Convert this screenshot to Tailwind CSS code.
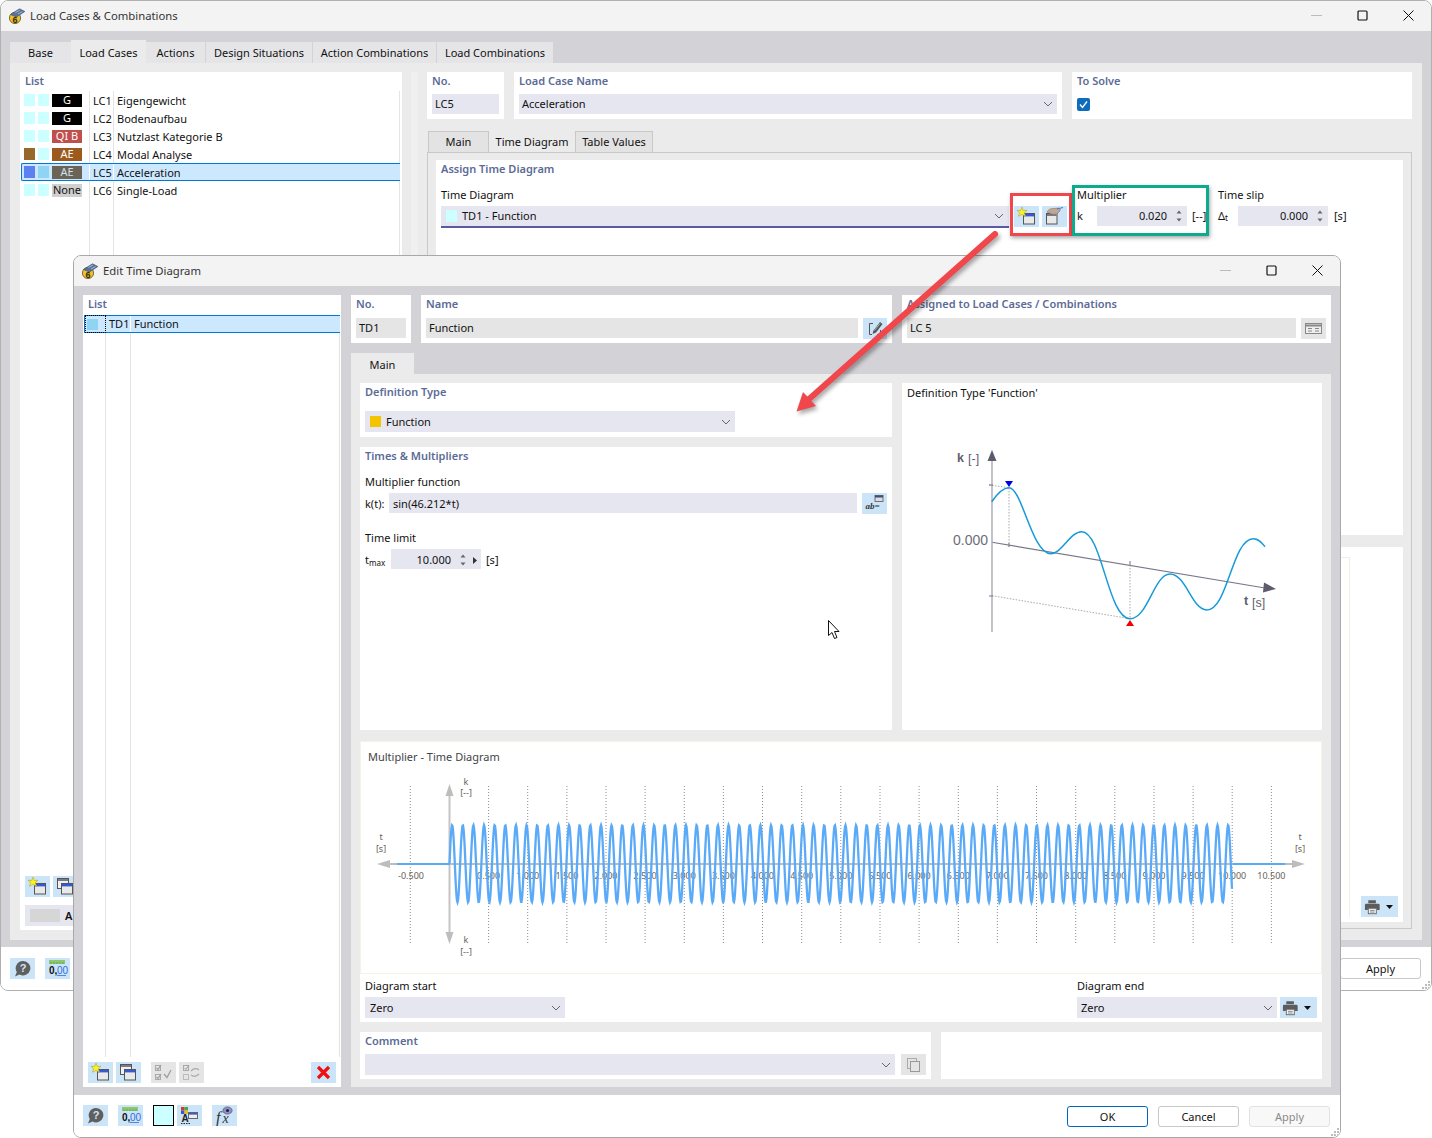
<!DOCTYPE html>
<html lang="en">
<head>
<meta charset="utf-8">
<title>Load Cases &amp; Combinations</title>
<script src="https://cdn.jsdelivr.net/npm/@tailwindcss/browser@4"></script>
</head>
<body class="bg-white">
<svg width="0" height="0" class="absolute">
  <defs>
    <symbol id="app" viewBox="0 0 16 16">
      <circle cx="6" cy="10" r="5.600" fill="#f0c030" stroke="#5e5020" stroke-width="0.800"/>
      <path d="M1.500 6.500 L10.500 0.800 L15.800 3.500 L7.500 9 Z" fill="#59749c" stroke="#36496a" stroke-width="0.600"/>
      <path d="M6.500 4.500 L11 2 M9 6 L13.500 3.500" stroke="#c9d6e6" stroke-width="0.700"/>
      <text x="6" y="14.500" font-size="9" font-weight="700" text-anchor="middle" fill="#332a00" font-family="Liberation Sans">6</text>
    </symbol>
    <symbol id="new" viewBox="0 0 25 21">
      <rect x="9.500" y="7.500" width="11" height="10.500" fill="#e9e9e9" stroke="#555"/>
      <rect x="10" y="8" width="10" height="2.400" fill="#3658d8"/>
      <path d="M8 1 L9.300 4.500 L13 4.200 L10.300 6.700 L11.600 10.300 L8 8.400 L4.400 10.300 L5.700 6.700 L3 4.200 L6.700 4.500 Z" fill="#fff21a" stroke="#9a9a40" stroke-width="0.500"/>
    </symbol>
    <symbol id="copy" viewBox="0 0 25 21">
      <rect x="4.500" y="2.500" width="11" height="10" fill="#f0f0f0" stroke="#555"/>
      <rect x="5" y="3" width="10" height="2" fill="#7a7a8a"/>
      <rect x="8.500" y="7.500" width="11" height="10.500" fill="#e9e9e9" stroke="#555"/>
      <rect x="9" y="8" width="10" height="2.400" fill="#3658d8"/>
    </symbol>
    <symbol id="edit" viewBox="0 0 25 21">
      <rect x="4.500" y="7.500" width="10.500" height="10.500" fill="#e9e9e9" stroke="#555"/>
      <rect x="5" y="8" width="9.500" height="2" fill="#7a7a8a"/>
      <path d="M5 6 Q7 2 12 2.500 L17 2 Q19 3 18 5 L15 8 Q10 9.500 5 6Z" fill="#c0a890" stroke="#7a6a5c" stroke-width="0.500"/>
      <path d="M15 3 L21 1.500" stroke="#4a78d8" stroke-width="1.200"/>
    </symbol>
    <symbol id="help" viewBox="0 0 25 21">
      <path d="M13 3 a7.200 7.200 0 1 1 -3.500 13.400 L5 18.500 L6.800 14 A7.200 7.200 0 0 1 13 3Z" fill="#5f5f5f"/>
      <text x="13" y="14" font-size="11" font-weight="700" text-anchor="middle" fill="#cfe5f7" font-family="Liberation Sans">?</text>
    </symbol>
    <symbol id="num" viewBox="0 0 25 21">
      <rect x="4" y="2" width="16" height="4" fill="#8cc874"/>
      <path d="M6 4V6M9 4V6M12 4V6M15 4V6M18 4V6" stroke="#5f9a48" stroke-width="0.800"/>
      <text x="4" y="15.500" font-size="10" font-weight="700" fill="#111" font-family="Liberation Sans">0,</text>
      <text x="12" y="15.500" font-size="10" fill="#2f6fdc" font-family="Liberation Sans">00</text>
      <path d="M12 17.500H21" stroke="#2f6fdc" stroke-width="0.800"/>
    </symbol>
    <symbol id="style" viewBox="0 0 25 21">
      <rect x="4" y="2" width="3.500" height="3.500" fill="#d83a2c"/><rect x="7.500" y="2" width="3.500" height="3.500" fill="#45a845"/>
      <rect x="4" y="5.500" width="3.500" height="3.500" fill="#3658d8"/><rect x="7.500" y="5.500" width="3.500" height="3.500" fill="#e8c020"/>
      <text x="4.500" y="17" font-size="10" font-weight="700" fill="#222" font-family="Liberation Sans">A</text>
      <path d="M4 18.500H13" stroke="#222" stroke-dasharray="1.500 1"/>
      <rect x="11.500" y="7.500" width="9" height="6" fill="#eee" stroke="#666"/><rect x="12" y="8" width="8" height="1.600" fill="#3658d8"/>
    </symbol>
    <symbol id="fx" viewBox="0 0 25 21">
      <text x="4" y="18" font-size="16" font-style="italic" font-family="Liberation Serif" fill="#333">f</text>
      <text x="10.500" y="18" font-size="14" font-style="italic" font-family="Liberation Serif" fill="#333">x</text>
      <ellipse cx="15.500" cy="5.500" rx="4.600" ry="3.600" fill="#8f8fd0" stroke="#444" stroke-width="0.600"/>
      <circle cx="15.500" cy="5.500" r="1.500" fill="#223"/>
    </symbol>
    <symbol id="print" viewBox="0 0 20 19">
      <path d="M5 1.500H14V5H5Z" fill="#5c5c5c"/>
      <path d="M2.500 5.500H17a1.500 1.500 0 0 1 1.500 1.500V13H15V11H4.500V13H1V7a1.500 1.500 0 0 1 1.500-1.500Z" fill="#5c5c5c"/>
      <rect x="5" y="11" width="9.500" height="6.500" fill="#f4f4f4" stroke="#5c5c5c"/>
      <path d="M7 13.500H12.500M7 15.500H12.500" stroke="#5c5c5c" stroke-width="0.800"/>
    </symbol>
    <symbol id="chev" viewBox="0 0 10 6"><path d="M1 1 L5 5 L9 1" fill="none" stroke="#666" stroke-width="1"/></symbol>
    <symbol id="spin" viewBox="0 0 8 14"><path d="M4 1.500 L6.500 4.500 H1.500Z M4 12.500 L6.500 9.500 H1.500Z" fill="#666"/></symbol>
    <symbol id="grip" viewBox="0 0 11 11"><path d="M8 2h2v2H8zM5 5h2v2H5zM8 5h2v2H8zM2 8h2v2H2zM5 8h2v2H5zM8 8h2v2H8z" fill="#bdbdbd"/></symbol>
  </defs>
</svg>

<div class="relative w-[1432px] h-[1138px] overflow-hidden bg-white text-[11px] leading-[12px] text-[#111] font-['Noto_Sans','Liberation_Sans',sans-serif]">

  <!-- BACK WINDOW -->
  <section class="absolute left-0 top-0 w-[1432px] h-[991px] flex flex-col overflow-hidden rounded-lg border border-[#b0b0b0] bg-white">
    <header class="h-[30px] shrink-0 flex items-center bg-[#f3f3f3] pl-[8px]">
      <svg class="w-4 h-4"><use href="#app"/></svg>
      <span class="ml-[5px] text-[11.3px] text-[#333]">Load Cases &amp; Combinations</span>
      <div class="ml-auto flex items-center gap-[35px] pr-[17px] pb-[2px]">
        <svg width="11" height="11"><path d="M0 5.500H11" stroke="#bbb"/></svg>
        <svg width="11" height="11"><rect x="1" y="1" width="9" height="9" rx="1" fill="none" stroke="#111" stroke-width="1.200"/></svg>
        <svg width="11" height="11"><path d="M0.500 0.500L10.500 10.500M10.500 0.500L0.500 10.500" stroke="#111"/></svg>
      </div>
    </header>
    <div class="h-[916px] shrink-0 flex flex-col bg-[#d2d2d7] px-[9px] pt-[9px]">
      <nav class="h-[23px] shrink-0 flex items-end">
        <span class="w-[61px] h-[21px] flex items-center justify-center bg-[#e5e5e8]">Base</span>
        <span class="w-[75px] h-[23px] flex items-center justify-center bg-[#ebebeb] pt-[2px]">Load Cases</span>
        <span class="w-[59px] h-[21px] flex items-center justify-center bg-[#e5e5e8]">Actions</span>
        <span class="ml-px w-[106px] h-[21px] flex items-center justify-center bg-[#e5e5e8]">Design Situations</span>
        <span class="ml-px w-[123px] h-[21px] flex items-center justify-center bg-[#e5e5e8]">Action Combinations</span>
        <span class="ml-px w-[116px] h-[21px] flex items-center justify-center bg-[#e5e5e8]">Load Combinations</span>
      </nav>
      <div class="w-[1412px] h-[877px] flex bg-[#ebebeb] pl-[10px] pt-[9px]">
        <!-- list -->
        <div class="w-[382px] h-[858px] flex flex-col bg-white">
          <div class="h-[18px] mb-px flex items-center pl-[5px] font-semibold text-[#5b6b96]">List</div>
          <div class="relative h-[785px]">
            <div class="absolute left-[69px] top-0 bottom-0 w-px bg-[#e4e4e4]"></div>
            <div class="absolute left-[93px] top-0 bottom-0 w-px bg-[#e4e4e4]"></div>
            <div class="absolute left-[379px] top-0 bottom-0 w-px bg-[#e4e4e4]"></div>
            <div class="relative h-[18px] flex items-center pl-[4px]"><i class="w-[11px] h-[12px] bg-[#ccffff]"></i><i class="ml-[3px] w-[11px] h-[12px] bg-[#ccffff]"></i><b class="ml-[3px] w-[30px] h-[13px] flex items-center justify-center font-normal bg-black text-white">G</b><span class="ml-[11px] w-[24px] mt-[2px]">LC1</span><span class="mt-[2px]">Eigengewicht</span></div>
            <div class="relative h-[18px] flex items-center pl-[4px]"><i class="w-[11px] h-[12px] bg-[#ccffff]"></i><i class="ml-[3px] w-[11px] h-[12px] bg-[#ccffff]"></i><b class="ml-[3px] w-[30px] h-[13px] flex items-center justify-center font-normal bg-black text-white">G</b><span class="ml-[11px] w-[24px] mt-[2px]">LC2</span><span class="mt-[2px]">Bodenaufbau</span></div>
            <div class="relative h-[18px] flex items-center pl-[4px]"><i class="w-[11px] h-[12px] bg-[#ccffff]"></i><i class="ml-[3px] w-[11px] h-[12px] bg-[#ccffff]"></i><b class="ml-[3px] w-[30px] h-[13px] flex items-center justify-center font-normal bg-[#c0504d] text-white">QI B</b><span class="ml-[11px] w-[24px] mt-[2px]">LC3</span><span class="mt-[2px]">Nutzlast Kategorie B</span></div>
            <div class="relative h-[18px] flex items-center pl-[4px]"><i class="w-[11px] h-[12px] bg-[#96682a]"></i><i class="ml-[3px] w-[11px] h-[12px] bg-[#ccffff]"></i><b class="ml-[3px] w-[30px] h-[13px] flex items-center justify-center font-normal bg-[#9c5a1c] text-white">AE</b><span class="ml-[11px] w-[24px] mt-[2px]">LC4</span><span class="mt-[2px]">Modal Analyse</span></div>
            <div class="relative h-[18px] flex items-center pl-[2px] ml-px w-[379px] bg-[#cce8ff] border-y border-l border-[#0078d7] rounded-l-[2px]"><i class="absolute left-[67px] top-0 bottom-0 w-px bg-white"></i><i class="absolute left-[91px] top-0 bottom-0 w-px bg-white"></i><i class="w-[11px] h-[12px] bg-[#5c80f0]"></i><i class="ml-[3px] w-[11px] h-[12px] bg-[#90d4f4]"></i><b class="ml-[3px] w-[30px] h-[13px] flex items-center justify-center font-normal bg-[#6b6356] text-[#cfe0ef]">AE</b><span class="ml-[11px] w-[24px] mt-[2px]">LC5</span><span class="mt-[2px]">Acceleration</span></div>
            <div class="relative h-[18px] flex items-center pl-[4px]"><i class="w-[11px] h-[12px] bg-[#ccffff]"></i><i class="ml-[3px] w-[11px] h-[12px] bg-[#ccffff]"></i><b class="ml-[3px] w-[30px] h-[13px] flex items-center justify-center font-normal bg-[#cfcfcf]">None</b><span class="ml-[11px] w-[24px] mt-[2px]">LC6</span><span class="mt-[2px]">Single-Load</span></div>
          </div>
          <div class="h-[21px] flex gap-[3px] pl-[5px]">
            <svg class="w-[25px] h-[21px] bg-[#cce4f7]"><use href="#new"/></svg>
            <svg class="w-[25px] h-[21px] bg-[#cce4f7]"><use href="#copy"/></svg>
          </div>
          <div class="mt-[8px] ml-[5px] w-[300px] h-[21px] flex items-center bg-[#e6e6f0] pl-[5px]">
            <i class="w-[30px] h-[13px] bg-[#d6d6d6]"></i><span class="ml-[5px] font-semibold">A</span>
          </div>
        </div>
        <div class="ml-[9px] w-[7px] h-[868px] bg-[#f0f0f0]"></div>
        <!-- right -->
        <div class="ml-[9px] w-[985px] flex flex-col">
          <div class="h-[47px] flex gap-[10px]">
            <div class="w-[77px] bg-white pl-[5px]">
              <p class="h-[18px] flex items-center font-semibold text-[#5b6b96]">No.</p>
              <p class="mt-[4px] w-[67px] h-[20px] flex items-center bg-[#e6e6f0] pl-[3px]">LC5</p>
            </div>
            <div class="w-[548px] bg-white pl-[5px]">
              <p class="h-[18px] flex items-center font-semibold text-[#5b6b96]">Load Case Name</p>
              <p class="mt-[4px] w-[538px] h-[20px] flex items-center justify-between bg-[#e6e6f0] px-[3px] pr-[4px]">Acceleration<svg class="w-[10px] h-[6px]"><use href="#chev"/></svg></p>
            </div>
            <div class="w-[340px] bg-white pl-[5px]">
              <p class="h-[18px] flex items-center font-semibold text-[#5b6b96]">To Solve</p>
              <svg width="13" height="13" class="mt-[8px]"><rect width="13" height="13" rx="2" fill="#0f6cbd"/><path d="M3 6.500L5.500 9.500L10 3.500" fill="none" stroke="#fff" stroke-width="1.300"/></svg>
            </div>
          </div>
          <div class="mt-[12px] h-[21px] flex items-end pl-px">
            <span class="w-[61px] h-[21px] flex items-center justify-center bg-[#e3e3e3] border border-b-0 border-[#c8c8c8]">Main</span>
            <span class="w-[86px] h-[22px] flex items-center justify-center bg-[#ebebeb] pt-[2px]">Time Diagram</span>
            <span class="w-[78px] h-[21px] flex items-center justify-center bg-[#e3e3e3] border border-b-0 border-[#c8c8c8]">Table Values</span>
          </div>
          <div class="w-[985px] h-[777px] border border-[#c8c8c8] px-[8px] pt-[7px] flex flex-col gap-[12px]">
            <div class="relative h-[375px] bg-white pl-[5px]">
              <p class="h-[18px] flex items-center font-semibold text-[#5b6b96]">Assign Time Diagram</p>
              <p class="mt-[7px] h-[20px] flex items-center">Time Diagram</p>
              <div class="mt-px flex items-start">
                <div class="w-[568px] h-[22px] flex items-center bg-[#e6e6f0] border-b-2 border-[#5a5aa0] pl-[5px] pr-[5px]">
                  <i class="w-[11px] h-[12px] bg-[#ccffff]"></i><span class="ml-[5px]">TD1 - Function</span>
                  <svg class="ml-auto w-[10px] h-[6px]"><use href="#chev"/></svg>
                </div>
                <svg class="ml-[5px] w-[25px] h-[21px] bg-[#cce4f7]"><use href="#new"/></svg>
                <svg class="ml-[3px] w-[25px] h-[21px] bg-[#cce4f7]"><use href="#edit"/></svg>
                <span class="ml-[10px] w-[20px] h-[20px] flex items-center">k</span>
                <div class="w-[90px] h-[20px] flex items-center justify-end bg-[#e6e6f0] pr-[4px]">0.020<svg class="ml-[8px] w-[8px] h-[14px]"><use href="#spin"/></svg></div>
                <span class="ml-[5px] w-[26px] h-[20px] flex items-center">[--]</span>
                <span class="w-[20px] h-[20px] flex items-center">&#916;<sub class="text-[8px]">t</sub></span>
                <div class="w-[90px] h-[20px] flex items-center justify-end bg-[#e6e6f0] pr-[4px]">0.000<svg class="ml-[8px] w-[8px] h-[14px]"><use href="#spin"/></svg></div>
                <span class="ml-[6px] h-[20px] flex items-center">[s]</span>
              </div>
              <p class="absolute left-[641px] top-[25px] h-[20px] flex items-center">Multiplier</p>
              <p class="absolute left-[782px] top-[25px] h-[20px] flex items-center">Time slip</p>
            </div>
            <div class="relative h-[375px] bg-white">
              <div class="absolute left-[905px] top-[10px] w-[9px] h-[360px] border-t border-r border-[#f1efdf]"></div>
              <div class="absolute left-[925px] top-[349px] w-[37px] h-[21px] flex items-center gap-[5px] bg-[#cce4f7] pl-[3px]">
                <svg class="w-[17px] h-[16px]"><use href="#print"/></svg>
                <svg width="7" height="4"><path d="M0 0H7L3.500 4Z" fill="#111"/></svg>
              </div>
            </div>
          </div>
        </div>
      </div>
    </div>
    <footer class="flex-1 flex items-start bg-white pl-[9px] pt-[11px]">
      <svg class="w-[25px] h-[21px] bg-[#cce4f7]"><use href="#help"/></svg>
      <svg class="ml-[10px] w-[25px] h-[21px] bg-[#cce4f7]"><use href="#num"/></svg>
      <span class="ml-auto mr-[10px] w-[81px] h-[21px] flex items-center justify-center rounded-[3px] border border-[#c8c8c8] bg-white">Apply</span>
    </footer>
    <svg class="absolute right-0 bottom-0 w-[11px] h-[11px]"><use href="#grip"/></svg>
  </section>

  <!-- FRONT WINDOW -->
  <section class="absolute left-[73px] top-[255px] w-[1268px] h-[883px] flex flex-col overflow-hidden rounded-lg border border-[#a8a8a8] bg-white">
    <header class="h-[30px] shrink-0 flex items-center bg-[#f3f3f3] pl-[8px]">
      <svg class="w-4 h-4"><use href="#app"/></svg>
      <span class="ml-[5px] text-[11.3px] text-[#333]">Edit Time Diagram</span>
      <div class="ml-auto flex items-center gap-[35px] pr-[17px] pb-[2px]">
        <svg width="11" height="11"><path d="M0 5.500H11" stroke="#bbb"/></svg>
        <svg width="11" height="11"><rect x="1" y="1" width="9" height="9" rx="1" fill="none" stroke="#111" stroke-width="1.200"/></svg>
        <svg width="11" height="11"><path d="M0.500 0.500L10.500 10.500M10.500 0.500L0.500 10.500" stroke="#111"/></svg>
      </div>
    </header>
    <div class="h-[809px] shrink-0 flex gap-[10px] bg-[#d2d2d7] pl-[9px] pt-[9px]">
      <!-- list panel -->
      <div class="w-[258px] h-[792px] flex flex-col bg-white">
        <p class="h-[18px] mb-[2px] flex items-center pl-[5px] font-semibold text-[#5b6b96]">List</p>
        <div class="relative h-[742px]">
          <div class="absolute left-[22px] top-0 bottom-0 w-px bg-[#e4e4e4]"></div>
          <div class="absolute left-[47px] top-0 bottom-0 w-px bg-[#e4e4e4]"></div>
          <div class="absolute left-[256px] top-0 bottom-0 w-px bg-[#e4e4e4]"></div>
          <div class="relative ml-px w-[256px] h-[18px] flex items-center bg-[#cce8ff] border-y border-l border-[#0078d7]">
            <i class="absolute left-[45px] top-0 bottom-0 w-px bg-white"></i>
            <span class="w-[21px] h-[18px] shrink-0 flex items-center pl-px border border-dotted border-black"><i class="w-[11px] h-[11px] bg-[#90d4f4]"></i></span>
            <span class="ml-[3px] w-[25px]">TD1</span><span>Function</span>
          </div>
        </div>
        <div class="mt-[5px] h-[21px] flex pl-[5px]">
          <svg class="w-[25px] h-[21px] bg-[#cce4f7]"><use href="#new"/></svg>
          <svg class="ml-[3px] w-[25px] h-[21px] bg-[#cce4f7]"><use href="#copy"/></svg>
          <svg class="ml-[10px] w-[25px] h-[21px] bg-[#e5e5e5]" viewBox="0 0 25 21"><rect x="4.500" y="3.500" width="5" height="5" fill="none" stroke="#aaa"/><rect x="4.500" y="12.500" width="5" height="5" fill="none" stroke="#aaa"/><path d="M5.500 6L7 7.500L10 3M5.500 15L7 16.500L10 12M13 12L16 15.500L20 8" fill="none" stroke="#a0a0a0" stroke-width="1.300"/></svg>
          <svg class="ml-[3px] w-[25px] h-[21px] bg-[#e5e5e5]" viewBox="0 0 25 21"><rect x="4.500" y="3.500" width="5" height="5" fill="none" stroke="#aaa"/><rect x="4.500" y="12.500" width="5" height="5" fill="none" stroke="#bbb"/><path d="M5.500 6L7 7.500L10 3" fill="none" stroke="#a0a0a0"/><path d="M12 9Q16 5 20 8M20 12Q16 16 12 13" fill="none" stroke="#aaa" stroke-width="1.200"/></svg>
          <svg class="ml-auto mr-[5px] w-[25px] h-[21px] bg-[#cce4f7]" viewBox="0 0 25 21"><path d="M7 5L18 16M18 5L7 16" stroke="#f01010" stroke-width="3.200"/></svg>
        </div>
      </div>
      <!-- right -->
      <div class="w-[980px] flex flex-col">
        <div class="h-[48px] flex gap-[10px]">
          <div class="w-[60px] bg-white pl-[5px]">
            <p class="h-[18px] flex items-center font-semibold text-[#5b6b96]">No.</p>
            <p class="mt-[5px] w-[50px] h-[20px] flex items-center bg-[#e5e5e5] pl-[3px]">TD1</p>
          </div>
          <div class="w-[471px] bg-white pl-[5px]">
            <p class="h-[18px] flex items-center font-semibold text-[#5b6b96]">Name</p>
            <div class="mt-[5px] flex gap-[5px]">
              <p class="w-[432px] h-[20px] flex items-center bg-[#e5e5e5] pl-[3px]">Function</p>
              <svg class="w-[24px] h-[21px] bg-[#cce4f7]" viewBox="0 0 24 21"><path d="M10 5.500H6.500V16.500H9M14 16.500H17.500V12" fill="none" stroke="#555"/><path d="M9.500 16L10.500 12.500L17 4L19.500 6L13 14.500Z" fill="#555"/><path d="M11.500 12.500L17 5.500" stroke="#cce4f7" stroke-width="0.700"/></svg>
            </div>
          </div>
          <div class="w-[429px] bg-white pl-[5px]">
            <p class="h-[18px] flex items-center font-semibold text-[#5b6b96]">Assigned to Load Cases / Combinations</p>
            <div class="mt-[5px] flex gap-[5px]">
              <p class="w-[389px] h-[20px] flex items-center bg-[#e5e5e5] pl-[3px]">LC 5</p>
              <svg class="w-[25px] h-[21px] bg-[#e5e5e5]" viewBox="0 0 25 21"><rect x="4.500" y="5.500" width="16" height="10" fill="#eee" stroke="#888"/><path d="M5 7.500H20" stroke="#888" stroke-width="2"/><path d="M7 10.500H11M14 10.500H18M7 13H11M14 13H18" stroke="#888"/></svg>
            </div>
          </div>
        </div>
        <div class="mt-[10px] h-[21px]">
          <span class="w-[63px] h-[21px] flex items-center justify-center bg-[#ebebeb] pt-[2px]">Main</span>
        </div>
        <div class="w-[980px] h-[713px] bg-[#ebebeb] p-[9px] pb-[8px] flex flex-col">
          <div class="h-[347px] flex gap-[10px]">
            <div class="w-[532px] flex flex-col gap-[10px]">
              <div class="h-[54px] bg-white pl-[5px]">
                <p class="h-[18px] flex items-center font-semibold text-[#5b6b96]">Definition Type</p>
                <div class="mt-[10px] w-[370px] h-[21px] flex items-center justify-between bg-[#e6e6f0] pl-[5px] pr-[4px]">
                  <span class="flex items-center"><i class="w-[11px] h-[11px] bg-[#f5c400]"></i><span class="ml-[5px]">Function</span></span>
                  <svg class="w-[10px] h-[6px]"><use href="#chev"/></svg>
                </div>
              </div>
              <div class="h-[283px] bg-white pl-[5px]">
                <p class="h-[18px] flex items-center font-semibold text-[#5b6b96]">Times &amp; Multipliers</p>
                <p class="mt-[8px] h-[18px] flex items-center">Multiplier function</p>
                <div class="mt-[2px] flex items-start">
                  <span class="w-[24px] h-[20px] flex items-center pt-[2px]">k(t):</span>
                  <p class="w-[468px] h-[20px] flex items-center bg-[#e6e6f0] pl-[4px] pt-[2px]">sin(46.212*t)</p>
                  <svg class="ml-[5px] w-[25px] h-[21px] bg-[#cce4f7]" viewBox="0 0 25 21"><rect x="13" y="2.500" width="8" height="6" fill="#ddd" stroke="#555" stroke-width="0.800"/><rect x="13" y="2.500" width="8" height="2" fill="#3d4a8a"/><text x="3.500" y="16" font-size="9" font-weight="700" font-style="italic" font-family="Liberation Serif" fill="#333">ab=</text></svg>
                </div>
                <p class="mt-[15px] h-[18px] flex items-center">Time limit</p>
                <div class="mt-[2px] flex items-center">
                  <span class="w-[26px] pt-[2px]">t<sub class="text-[8px]">max</sub></span>
                  <div class="w-[90px] h-[20px] flex items-center justify-end bg-[#e6e6f0] pr-[4px] pt-[2px]">10.000<svg class="ml-[8px] w-[8px] h-[14px]"><use href="#spin"/></svg><svg class="ml-[6px]" width="4" height="7"><path d="M0 0L4 3.500L0 7Z" fill="#333"/></svg></div>
                  <span class="ml-[5px] pt-[2px]">[s]</span>
                </div>
              </div>
            </div>
            <div class="w-[420px] bg-white">
              <p class="h-[20px] flex items-center pl-[5px]">Definition Type 'Function'</p>
              <svg class="block w-[420px] h-[327px]" viewBox="902 403 420 327">
                <path d="M992 542.300L1265 588" stroke="#77778a" stroke-width="1.100"/>
                <path d="M1264 582.500L1276 589L1263 592.500Z" fill="#5c5c6e"/>
                <path d="M992 455V632" stroke="#a9a9b3" stroke-width="1.400"/>
                <path d="M992 450L996.500 461H987.500Z" fill="#5c5c6e"/>
                <path d="M989 485L1009 487.700M1009 488V547M1130 565V618M992 595.700L1130 618.700" stroke="#a8a8a8" stroke-dasharray="1.500 1.500" fill="none"/>
                <path d="M989 485H993M989 596H993" stroke="#77778a"/>
                <path d="M1009 543V547M1130 561V566" stroke="#77778a"/>
                <path d="M991.700 501.700C997 494 1003 487.700 1009 487.700C1022 487.700 1032 553.700 1050.700 553.700C1062 553.700 1070 531.700 1081.700 531.700C1102 531.700 1108 618.700 1130 618.700C1148 618.700 1154 574 1170 574C1186 574 1192 610 1206.700 610C1228 610 1232 538.700 1253.300 538.700C1259 538.700 1262 543 1265 546.700" fill="none" stroke="#169ad8" stroke-width="1.500"/>
                <path d="M1005 481H1013L1009 487Z" fill="#0000e0"/>
                <path d="M1126 626H1134L1130 620Z" fill="#f00000"/>
                <text x="957" y="462" font-size="12.500" font-weight="700" fill="#60606e" font-family="Liberation Sans">k</text>
                <text x="968" y="463" font-size="12.500" fill="#60606e" font-family="Liberation Sans">[-]</text>
                <text x="953" y="545" font-size="14" fill="#6d6d7a" font-family="Liberation Sans">0.000</text>
                <text x="1244" y="605" font-size="12.500" font-weight="700" fill="#60606e" font-family="Liberation Sans">t</text>
                <text x="1252" y="607" font-size="12.500" fill="#60606e" font-family="Liberation Sans">[s]</text>
              </svg>
            </div>
          </div>
          <div class="mt-[11px] w-[962px] h-[281px] flex flex-col bg-white">
            <div class="h-[233px] border border-[#f5f3e8]">
              <p class="h-[30px] flex items-center pl-[7px] text-[#444]">Multiplier - Time Diagram</p>
              <svg class="block w-[960px] h-[201px]" viewBox="361 772 960 201">
                <path d="M410.300 786V943M488.600 786V943M527.700 786V943M566.900 786V943M606 786V943M645.100 786V943M684.300 786V943M723.400 786V943M762.500 786V943M801.700 786V943M840.800 786V943M880 786V943M919.100 786V943M958.300 786V943M997.400 786V943M1036.500 786V943M1075.700 786V943M1114.800 786V943M1154 786V943M1193.100 786V943M1232.200 786V943M1271.400 786V943" stroke="#8d8d8d" stroke-dasharray="1 2"/>
                <g font-size="9" fill="#6a6258" text-anchor="middle" font-family="Noto Sans">
                  <text x="411" y="879">-0.500</text><text x="488.600" y="879">0.500</text><text x="527.700" y="879">1.000</text><text x="566.900" y="879">1.500</text><text x="606" y="879">2.000</text><text x="645.100" y="879">2.500</text><text x="684.300" y="879">3.000</text><text x="723.400" y="879">3.500</text><text x="762.500" y="879">4.000</text><text x="801.700" y="879">4.500</text><text x="840.800" y="879">5.000</text><text x="880" y="879">5.500</text><text x="919.100" y="879">6.000</text><text x="958.300" y="879">6.500</text><text x="997.400" y="879">7.000</text><text x="1036.500" y="879">7.500</text><text x="1075.700" y="879">8.000</text><text x="1114.800" y="879">8.500</text><text x="1154" y="879">9.000</text><text x="1193.100" y="879">9.500</text><text x="1232.200" y="879">10.000</text><text x="1271.400" y="879">10.500</text>
                  <text x="381" y="840">t</text><text x="381" y="852">[s]</text>
                  <text x="1300" y="840">t</text><text x="1300" y="852">[s]</text>
                  <text x="466" y="785">k</text><text x="466" y="796">[--]</text>
                  <text x="466" y="943">k</text><text x="466" y="955">[--]</text>
                </g>
                <path d="M390 864H1292" stroke="#bdbdbd" stroke-width="2"/>
                <path d="M377 864L390 860V868Z M1305 864L1292 860V868Z" fill="#bdbdbd"/>
                <path d="M449.500 790V938" stroke="#c4c4c4" stroke-width="2"/>
                <path d="M449.500 784L453.500 796H445.500Z M449.500 944L453.500 932H445.500Z" fill="#bdbdbd"/>
                <path d="M397 864H450M1232.500 864H1285" stroke="#5aaaf8" stroke-width="2"/>
                <path id="sine" fill="none" stroke="#5aaaf8" stroke-width="2.300" d=""/>
              </svg>
            </div>
            <div class="h-[48px] flex justify-between pl-[5px] pr-[5px]">
              <div>
                <p class="h-[23px] flex items-center">Diagram start</p>
                <div class="w-[200px] h-[21px] flex items-center justify-between bg-[#e6e6f0] pl-[5px] pr-[4px]">Zero<svg class="w-[10px] h-[6px]"><use href="#chev"/></svg></div>
              </div>
              <div>
                <p class="h-[23px] flex items-center">Diagram end</p>
                <div class="flex gap-[3px]">
                  <div class="w-[200px] h-[21px] flex items-center justify-between bg-[#e6e6f0] pl-[4px] pr-[4px]">Zero<svg class="w-[10px] h-[6px]"><use href="#chev"/></svg></div>
                  <div class="w-[37px] h-[21px] flex items-center gap-[5px] bg-[#cce4f7] pl-[2px]">
                    <svg class="w-[17px] h-[16px]"><use href="#print"/></svg>
                    <svg width="7" height="4"><path d="M0 0H7L3.500 4Z" fill="#111"/></svg>
                  </div>
                </div>
              </div>
            </div>
          </div>
          <div class="mt-[10px] h-[47px] flex gap-[10px]">
            <div class="w-[571px] bg-white pl-[5px]">
              <p class="h-[18px] flex items-center font-semibold text-[#5b6b96]">Comment</p>
              <div class="mt-[4px] flex gap-[6px]">
                <div class="w-[530px] h-[21px] flex items-center justify-end bg-[#e6e6f0] pr-[4px]"><svg class="w-[10px] h-[6px]"><use href="#chev"/></svg></div>
                <svg class="w-[25px] h-[21px] bg-[#e5e5e5]" viewBox="0 0 25 21"><rect x="6.500" y="4.500" width="9" height="10" fill="#e5e5e5" stroke="#aaa"/><rect x="9.500" y="7.500" width="9" height="10" fill="#e5e5e5" stroke="#999"/></svg>
              </div>
            </div>
            <div class="w-[381px] bg-white"></div>
          </div>
        </div>
      </div>
    </div>
    <footer class="flex-1 flex items-start bg-white pl-[9px] pt-[10px]">
      <svg class="w-[25px] h-[21px] bg-[#cce4f7]"><use href="#help"/></svg>
      <svg class="ml-[10px] w-[25px] h-[21px] bg-[#cce4f7]"><use href="#num"/></svg>
      <i class="ml-[10px] w-[21px] h-[21px] bg-[#ccffff] border border-black"></i>
      <svg class="ml-[3px] w-[25px] h-[21px] bg-[#cce4f7]"><use href="#style"/></svg>
      <svg class="ml-[10px] w-[25px] h-[21px] bg-[#cce4f7]"><use href="#fx"/></svg>
      <div class="ml-auto mr-[10px] flex gap-[10px] pt-px">
        <span class="w-[81px] h-[21px] flex items-center justify-center rounded-[3px] border border-[#0067c0] bg-white">OK</span>
        <span class="w-[81px] h-[21px] flex items-center justify-center rounded-[3px] border border-[#c8c8c8] bg-white">Cancel</span>
        <span class="w-[81px] h-[21px] flex items-center justify-center rounded-[3px] border border-[#e2e2e2] bg-[#f8f8f8] text-[#8a8a8a]">Apply</span>
      </div>
    </footer>
    <svg class="absolute right-0 bottom-0 w-[11px] h-[11px]"><use href="#grip"/></svg>
  </section>

  <!-- Annotations over the windows -->
  <div class="absolute left-[1010px] top-[193px] w-[62px] h-[43px] border-[3px] border-[#f0474c] shadow-[1px_2px_4px_rgba(0,0,0,0.35)]"></div>
  <div class="absolute left-[1072px] top-[185px] w-[137px] h-[51px] border-[3px] border-[#0cab8d] shadow-[1px_2px_4px_rgba(0,0,0,0.35)]"></div>
  <svg class="absolute left-0 top-0 pointer-events-none drop-shadow-[2px_3px_2px_rgba(0,0,0,0.35)]" width="1432" height="1138">
    <path d="M995 234L808 400" stroke="#f0474c" stroke-width="6" stroke-linecap="round"/>
    <path d="M796.500 411.500L803 392L816 406Z" fill="#f0474c"/>
  </svg>
  <svg class="absolute left-[828px] top-[620px]" width="13" height="20"><path d="M0.500 0.500V15.500L4 12.500L6.500 18.500L9 17.500L6.500 11.500H11Z" fill="#fff" stroke="#111"/></svg>
</div>
<script>
  var d = "";
  for (var x = 449.5; x <= 1232.3; x += 0.5) {
    var y = 863.7 - 38.5 * Math.sin(2 * Math.PI * (x - 449.5) / 10.63);
    d += (d ? "L" : "M") + x.toFixed(1) + " " + y.toFixed(2);
  }
  document.getElementById("sine").setAttribute("d", d);
</script>
</body>
</html>
